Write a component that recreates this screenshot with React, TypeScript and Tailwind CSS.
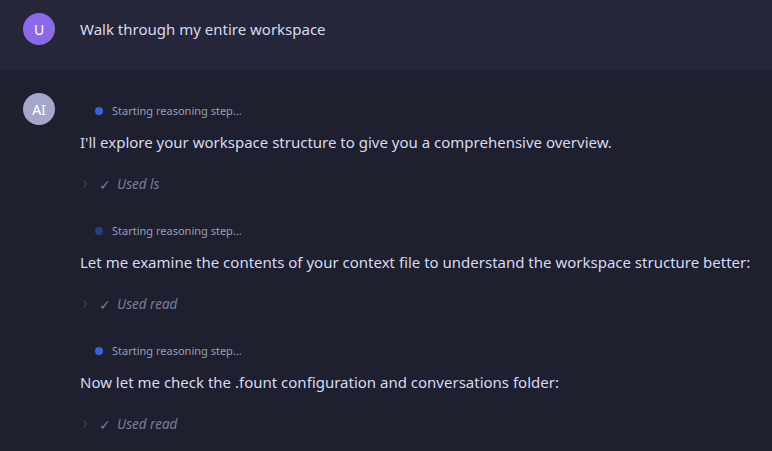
import { ChevronRight } from 'lucide-react';

const steps = [
  { dot: 'bg-[#3a62d4]', text: "I'll explore your workspace structure to give you a comprehensive overview.", tool: 'ls' },
  { dot: 'bg-[#2c3d7c]', text: 'Let me examine the contents of your context file to understand the workspace structure better:', tool: 'read' },
  { dot: 'bg-[#3a62d4]', text: 'Now let me check the .fount configuration and conversations folder:', tool: 'read' },
];

const Step = ({ dot, text, tool }: { dot: string; text: string; tool: string }) => (
  <div className="flex flex-col">
    <div className="flex items-center h-4 pl-[15px] gap-[9px] text-[11px] text-[#9c9eb8]">
      <span className={`w-[8px] h-[8px] rounded-full ${dot}`}></span>
      <span>Starting reasoning step...</span>
    </div>
    <div className="mt-[11px] h-6 leading-6 text-[15px] text-[#d8daf2] whitespace-nowrap">{text}</div>
    <div className="mt-[20px] h-5 flex items-center text-[13.5px] text-[#7b7d97] italic">
      <ChevronRight size={12} strokeWidth={2} className="text-[#4f5169] -ml-[1px]" />
      <span className="ml-[8px] not-italic text-[14px] text-[#7b7d97]">✓</span>
      <span className="ml-[6px]">Used {tool}</span>
    </div>
  </div>
);

export default function App() {
  return (
    <div className="w-[772px] h-[451px] overflow-hidden bg-[#1e1f2f] font-['Noto_Sans',sans-serif]">
      <div className="h-[70px] bg-[#252639] flex items-start px-[23px] pt-[13px] gap-[25px]">
        <div className="w-8 h-8 shrink-0 rounded-full bg-[#8b6ae9] flex items-center justify-center text-white text-[14px]">U</div>
        <div className="h-8 flex items-center text-[15px] text-[#d8daf2]">Walk through my entire workspace</div>
      </div>
      <div className="flex items-start px-[23px] pt-[23px] gap-[25px]">
        <div className="w-8 h-8 shrink-0 rounded-full bg-[#a4a7c9] flex items-center justify-center text-white text-[14px]">AI</div>
        <div className="flex flex-col gap-[29px] pt-[10px]">
          {steps.map((s, i) => (
            <Step key={i} {...s} />
          ))}
        </div>
      </div>
    </div>
  );
}
